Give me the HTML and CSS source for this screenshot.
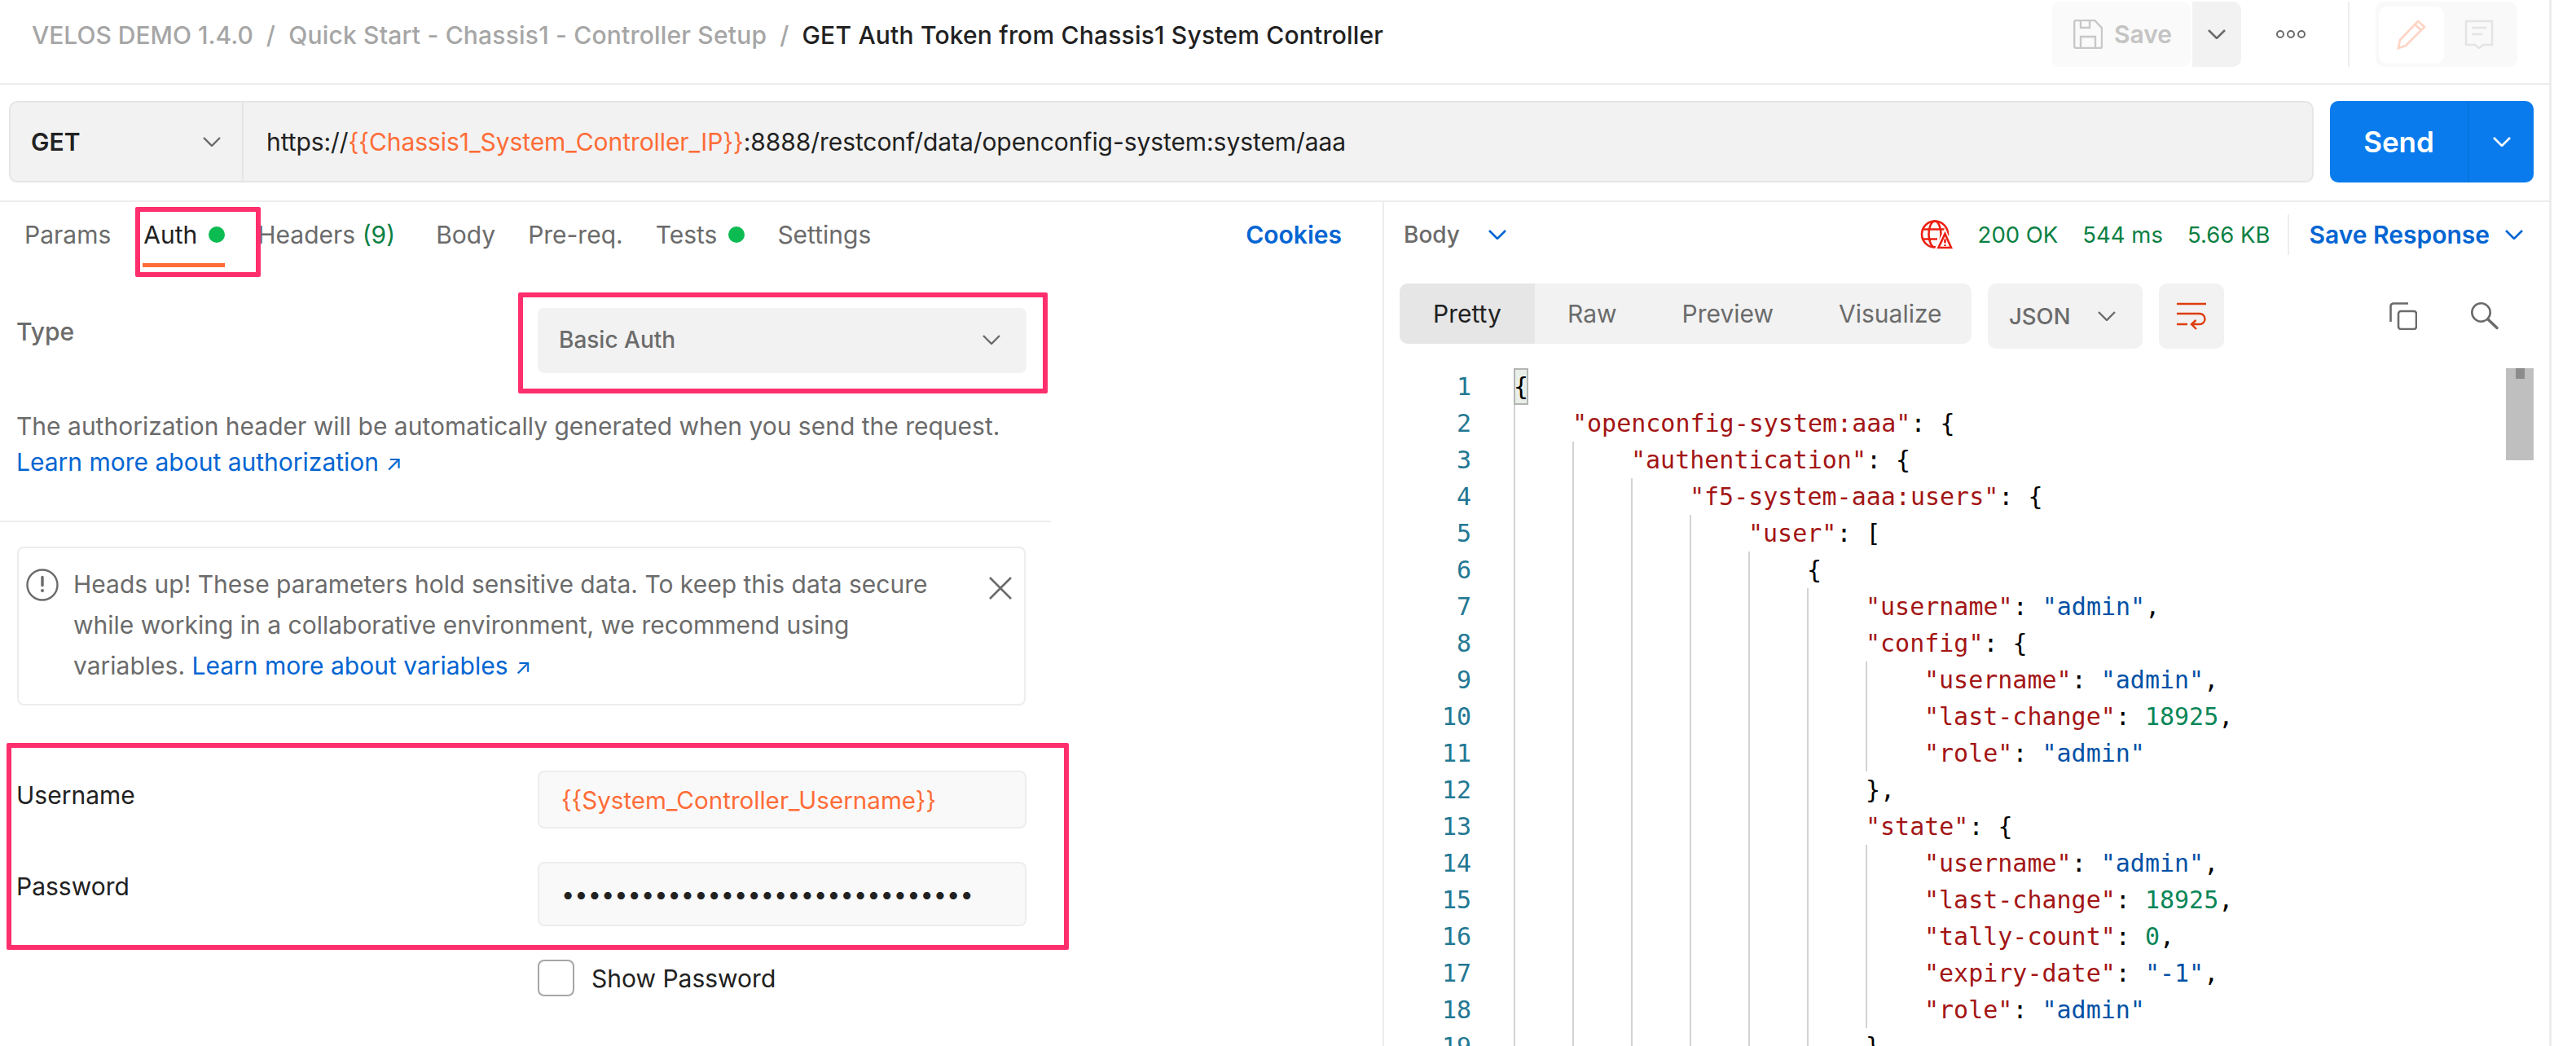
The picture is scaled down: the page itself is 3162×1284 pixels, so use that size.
FILE: index.html
```html
<!DOCTYPE html>
<html lang="en">
<head>
<meta charset="utf-8">
<title>GET Auth Token from Chassis1 System Controller</title>
<link rel="stylesheet" href="styles.css">
</head>
<body>
<div class="app">
  <header class="topbar">
    <nav class="crumbs">
      <span class="crumb root">VELOS DEMO 1.4.0</span><span class="sep">/</span>
      <span class="crumb">Quick Start - Chassis1 - Controller Setup</span><span class="sep">/</span>
      <span class="crumb current">GET Auth Token from Chassis1 System Controller</span>
    </nav>
    <div class="top-actions">
      <div class="save-btn">
        <svg class="ic-save" viewBox="0 0 36 36" fill="none" stroke="#c8c8c8" stroke-width="2.4"><path d="M1.2 3a2 2 0 0 1 2-2h23l8.800 9.500V33a2 2 0 0 1-2 2H3.200a2 2 0 0 1-2-2z"/><path d="M9 1v9h11V1M9 35V21h18v14"/></svg>
        <span>Save</span>
      </div>
      <div class="save-more"><svg class="chev" viewBox="0 0 22 12" fill="none" stroke="#6b6b6b" stroke-width="2.6"><path d="M1 1l10 10L21 1"/></svg></div>
      <div class="dots"><i></i><i></i><i></i></div>
      <div class="vline"></div>
      <div class="mode">
        <div class="mode-on"><svg width="38" height="38" viewBox="0 0 38 38" fill="none" stroke="#ffd4c4" stroke-width="2.6"><path d="M27 2l8 7L12 32l-9 3 2-10zM23 6l8 7"/></svg></div>
        <div class="mode-off"><svg width="36" height="36" viewBox="0 0 36 36" fill="none" stroke="#e4e4e4" stroke-width="2.6"><path d="M2 2h32v29H23l-5 4-5-4H2z"/><path d="M9 10h18M9 18h13"/></svg></div>
      </div>
    </div>
  </header>

  <section class="urlrow">
    <div class="urlbar">
      <div class="method"><b>GET</b><svg class="chev" viewBox="0 0 22 12" fill="none" stroke="#6b6b6b" stroke-width="2.4"><path d="M1 1l10 10L21 1"/></svg></div>
      <div class="url">https://<span class="var">{{Chassis1_System_Controller_IP}}</span>:8888/restconf/data/openconfig-system:system/aaa</div>
    </div>
    <div class="send">
      <span class="send-label">Send</span>
      <span class="send-more"><svg class="chev" viewBox="0 0 22 12" fill="none" stroke="#fff" stroke-width="2.6"><path d="M1 1l10 10L21 1"/></svg></span>
    </div>
  </section>

  <main class="panes">
    <section class="req">
      <div class="tabs">
        <span class="tab">Params</span>
        <span class="tab active">Auth<i class="dot"></i></span>
        <span class="tab wide">Headers <em>(9)</em></span>
        <span class="tab">Body</span>
        <span class="tab">Pre-req.</span>
        <span class="tab">Tests<i class="dot"></i></span>
        <span class="tab">Settings</span>
        <span class="cookies">Cookies</span>
      </div>
      <div class="auth">
        <div class="auth-left">
          <div class="type-label">Type</div>
          <p class="desc">The authorization header will be automatically generated when you send the request.<br><a class="link">Learn more about authorization <span class="arr">↗</span></a></p>
        </div>
        <div class="select"><span>Basic Auth</span><svg class="chev" viewBox="0 0 22 12" fill="none" stroke="#6b6b6b" stroke-width="2.4"><path d="M1 1l10 10L21 1"/></svg></div>
      </div>
      <div class="rule"></div>
      <div class="alert">
        <svg class="ic-info" viewBox="0 0 40 40" fill="none" stroke="#6b6b6b" stroke-width="2.4"><circle cx="20" cy="20" r="18.500"/><path d="M20 10.500v10" stroke-width="3.400" stroke-linecap="round"/><circle cx="20" cy="27" r="2" fill="#6b6b6b" stroke="none"/></svg>
        <p>Heads up! These parameters hold sensitive data. To keep this data secure while working in a collaborative environment, we recommend using variables. <a class="link">Learn more about variables <span class="arr">↗</span></a></p>
        <svg class="ic-close" viewBox="0 0 28 28" fill="none" stroke="#6b6b6b" stroke-width="2.6"><path d="M1 1l26 26M27 1L1 27"/></svg>
      </div>
      <div class="field user">
        <label>Username</label>
        <div class="input var">{{System_Controller_Username}}</div>
      </div>
      <div class="field secret">
        <label>Password</label>
        <div class="input pass">•••••••••••••••••••••••••••••••</div>
      </div>
      <div class="show"><i class="check"></i><span>Show Password</span></div>
    </section>

    <section class="res">
      <div class="res-head">
        <span class="res-body">Body</span>
        <svg class="chev body-chev" viewBox="0 0 22 12" fill="none" stroke="#0265d2" stroke-width="2.6"><path d="M1 1l10 10L21 1"/></svg>
        <svg class="ic-globe" viewBox="0 0 40 36" fill="none" stroke="#eb2013" stroke-width="2.600"><circle cx="18" cy="17.500" r="16"/><ellipse cx="18" cy="17.500" rx="7.500" ry="16"/><path d="M3 11.500h30M3 23.500h18"/><path d="M30.500 13L39 34.500H20z" fill="#fff" stroke="#fff" stroke-width="3"/><path d="M30.500 17L38 34H22.500z" fill="#fff"/><path d="M30.500 23.500v5M30.500 30.200v1.800"/></svg>
        <span class="stat">200 OK</span>
        <span class="stat">544 ms</span>
        <span class="stat">5.66 KB</span>
        <span class="res-sep"></span>
        <span class="save-res">Save Response</span>
        <svg class="chev save-chev" viewBox="0 0 22 12" fill="none" stroke="#0265d2" stroke-width="2.6"><path d="M1 1l10 10L21 1"/></svg>
      </div>
      <div class="res-tools">
        <div class="seg">
          <span class="seg-item on">Pretty</span>
          <span class="seg-item">Raw</span>
          <span class="seg-item">Preview</span>
          <span class="seg-item">Visualize</span>
        </div>
        <div class="fmt"><span>JSON</span><svg class="chev" viewBox="0 0 22 12" fill="none" stroke="#6b6b6b" stroke-width="2.4"><path d="M1 1l10 10L21 1"/></svg></div>
        <div class="wrap"><svg width="36" height="36" viewBox="0 0 36 36" fill="none" stroke="#dd3d0e" stroke-width="2.400"><path d="M0 3h36M0 15h28a6.500 6.500 0 0 1 0 13H18M23.500 23L18 28l6 6M0 28h13"/></svg></div>
        <svg class="ic-copy" viewBox="0 0 34 34" fill="none" stroke="#6b6b6b" stroke-width="2.600"><rect x="11" y="11" width="22" height="22" rx="3"/><path d="M1.500 24V5A3.500 3.500 0 0 1 5 1.500h18"/></svg>
        <svg class="ic-search" viewBox="0 0 34 34" fill="none" stroke="#6b6b6b" stroke-width="2.600" stroke-linecap="round"><circle cx="12.500" cy="12.500" r="11.200"/><path d="M21 21l11 10.500" stroke-width="3.400"/></svg>
      </div>
      <div class="editor">
        <div class="code">
          <div class="row"><span class="num">1</span><span class="brace">{</span></div>
          <div class="row"><span class="num">2</span><i class="g"></i><span class="k">"openconfig-system:aaa"</span>: {</div>
          <div class="row"><span class="num">3</span><i class="g"></i><i class="g"></i><span class="k">"authentication"</span>: {</div>
          <div class="row"><span class="num">4</span><i class="g"></i><i class="g"></i><i class="g"></i><span class="k">"f5-system-aaa:users"</span>: {</div>
          <div class="row"><span class="num">5</span><i class="g"></i><i class="g"></i><i class="g"></i><i class="g"></i><span class="k">"user"</span>: [</div>
          <div class="row"><span class="num">6</span><i class="g"></i><i class="g"></i><i class="g"></i><i class="g"></i><i class="g"></i>{</div>
          <div class="row"><span class="num">7</span><i class="g"></i><i class="g"></i><i class="g"></i><i class="g"></i><i class="g"></i><i class="g"></i><span class="k">"username"</span>: <span class="s">"admin"</span>,</div>
          <div class="row"><span class="num">8</span><i class="g"></i><i class="g"></i><i class="g"></i><i class="g"></i><i class="g"></i><i class="g"></i><span class="k">"config"</span>: {</div>
          <div class="row"><span class="num">9</span><i class="g"></i><i class="g"></i><i class="g"></i><i class="g"></i><i class="g"></i><i class="g"></i><i class="g"></i><span class="k">"username"</span>: <span class="s">"admin"</span>,</div>
          <div class="row"><span class="num">10</span><i class="g"></i><i class="g"></i><i class="g"></i><i class="g"></i><i class="g"></i><i class="g"></i><i class="g"></i><span class="k">"last-change"</span>: <span class="n">18925</span>,</div>
          <div class="row"><span class="num">11</span><i class="g"></i><i class="g"></i><i class="g"></i><i class="g"></i><i class="g"></i><i class="g"></i><i class="g"></i><span class="k">"role"</span>: <span class="s">"admin"</span></div>
          <div class="row"><span class="num">12</span><i class="g"></i><i class="g"></i><i class="g"></i><i class="g"></i><i class="g"></i><i class="g"></i>},</div>
          <div class="row"><span class="num">13</span><i class="g"></i><i class="g"></i><i class="g"></i><i class="g"></i><i class="g"></i><i class="g"></i><span class="k">"state"</span>: {</div>
          <div class="row"><span class="num">14</span><i class="g"></i><i class="g"></i><i class="g"></i><i class="g"></i><i class="g"></i><i class="g"></i><i class="g"></i><span class="k">"username"</span>: <span class="s">"admin"</span>,</div>
          <div class="row"><span class="num">15</span><i class="g"></i><i class="g"></i><i class="g"></i><i class="g"></i><i class="g"></i><i class="g"></i><i class="g"></i><span class="k">"last-change"</span>: <span class="n">18925</span>,</div>
          <div class="row"><span class="num">16</span><i class="g"></i><i class="g"></i><i class="g"></i><i class="g"></i><i class="g"></i><i class="g"></i><i class="g"></i><span class="k">"tally-count"</span>: <span class="n">0</span>,</div>
          <div class="row"><span class="num">17</span><i class="g"></i><i class="g"></i><i class="g"></i><i class="g"></i><i class="g"></i><i class="g"></i><i class="g"></i><span class="k">"expiry-date"</span>: <span class="s">"-1"</span>,</div>
          <div class="row"><span class="num">18</span><i class="g"></i><i class="g"></i><i class="g"></i><i class="g"></i><i class="g"></i><i class="g"></i><i class="g"></i><span class="k">"role"</span>: <span class="s">"admin"</span></div>
          <div class="row"><span class="num">19</span><i class="g"></i><i class="g"></i><i class="g"></i><i class="g"></i><i class="g"></i><i class="g"></i>}</div>
        </div>
        <div class="scroll"><i></i></div>
      </div>
    </section>
  </main>
</div>
<div class="mark mark-tab"></div>
<div class="mark mark-type"></div>
<div class="mark mark-cred"></div>
</body>
</html>
```
FILE: styles.css
```css
* { box-sizing: border-box; }
html, body { margin: 0; height: 1284px; overflow: hidden; background: #fff; }
body { position: relative; width: 3162px; font-family: Inter, "Liberation Sans", sans-serif; font-size: 30px; color: #6b6b6b; }
p { margin: 0; }
em { font-style: normal; color: #0b8043; }
.app { width: 3132px; height: 1284px; border-right: 3px solid #ededed; display: flex; flex-direction: column; }
.chev { width: 22px; height: 12px; flex: none; }
.var { color: #ff6c37; }

.topbar { height: 104px; flex: none; border-bottom: 2px solid #ededed; display: flex; justify-content: space-between; padding-left: 39px; }
.crumbs { display: flex; align-items: center; gap: 16px; height: 86px; color: #a6a6a6; font-weight: 500; white-space: nowrap; letter-spacing: 0.2px; }
.crumb.root { letter-spacing: 0; }
.crumb.current { color: #212121; }
.top-actions { display: flex; align-items: flex-start; padding-top: 2px; padding-right: 39px; }
.save-btn { width: 170px; height: 80px; background: #fafafa; border-radius: 8px 10px 10px 8px; display: flex; align-items: center; gap: 14px; padding-left: 26px; color: #c4c4c4; font-weight: 600; }
.ic-save { width: 36px; height: 36px; }
.save-more { width: 60px; height: 80px; margin-left: 2px; background: #f2f2f2; border-radius: 0 10px 10px 0; display: flex; align-items: center; justify-content: center; }
.dots { width: 131px; height: 80px; display: flex; align-items: center; justify-content: center; gap: 3px; padding-right: 9px; }
.dots i { width: 10px; height: 10px; border: 2.6px solid #6b6b6b; border-radius: 50%; }
.vline { width: 2px; height: 80px; background: #ededed; }
.mode { width: 174px; height: 80px; margin-left: 32px; background: #f9f9f9; border-radius: 10px; display: flex; padding: 6px 4px; }
.mode-on { width: 80px; height: 70px; background: #fff; border-radius: 10px; display: flex; align-items: center; justify-content: center; }
.mode-off { flex: 1; display: flex; align-items: center; justify-content: center; }

.urlrow { height: 144px; flex: none; border-bottom: 2px solid #ededed; display: flex; padding: 20px 19px 0 11px; gap: 20px; }
.urlbar { flex: 1; height: 100px; background: #f2f2f2; border: 2px solid #e6e6e6; border-radius: 10px; display: flex; align-items: center; color: #212121; }
.method { width: 286px; height: 100%; border-right: 2px solid #e6e6e6; display: flex; align-items: center; justify-content: space-between; padding: 0 26px 0 25px; }
.method b { font-weight: 600; }
.url { padding-left: 28px; letter-spacing: -0.07px; }
.send { width: 250px; height: 100px; background: #097bed; border-radius: 10px; display: flex; align-items: center; color: #fff; }
.send-label { width: 169px; height: 100%; display: flex; align-items: center; justify-content: center; font-size: 35px; font-weight: 600; }
.send-more { flex: 1; height: 100%; border-left: 2px solid #0774dd; display: flex; align-items: center; justify-content: center; }

.panes { flex: 1; display: flex; min-height: 0; }
.req { width: 1699px; flex: none; border-right: 2px solid #ededed; }
.res { flex: 1; min-width: 0; }

.tabs { height: 80px; display: flex; align-items: center; gap: 40px; padding: 0 50px 0 30px; }
.tab { display: flex; align-items: center; white-space: pre; }
.tab.wide { margin-right: 10px; }
.tab.active { color: #212121; position: relative; }
.tab.active::after { content: ""; position: absolute; left: -1px; right: 0; bottom: -22px; height: 5px; background: #ff6c37; }
.dot { width: 20px; height: 20px; margin-left: 14px; background: #0cbb52; border-radius: 50%; }
.cookies { margin-left: auto; color: #0265d2; font-weight: 600; }

.auth { display: flex; padding: 50px 0 0 20px; height: 311px; }
.auth-left { width: 640px; flex: none; }
.type-label { font-weight: 500; line-height: 40px; margin-top: 9px; }
.desc { width: 1300px; margin-top: 74px; line-height: 44px; }
.link { color: #0265d2; }
.arr { font-size: 26px; }
.select { width: 600px; height: 80px; background: #f2f2f2; border-radius: 8px; display: flex; align-items: center; justify-content: space-between; padding: 0 32px 2px 26px; font-weight: 500; font-size: 28px; }
.rule { height: 2px; width: 1290px; background: #ededed; }

.alert { width: 1238px; margin: 30px 0 0 21px; height: 195px; border: 2px solid #ededed; border-radius: 8px; display: flex; padding: 19px 0 0 9px; line-height: 50px; }
.alert p { width: 1060px; margin-left: 18px; flex: none; }
.ic-info { width: 40px; height: 40px; flex: none; margin-top: 6px; }
.ic-close { width: 28px; height: 28px; flex: none; margin: 16px 0 0 64px; }

.field { display: flex; align-items: flex-start; padding-left: 20px; color: #212121; }
.field label { width: 640px; line-height: 40px; padding-top: 10px; }
.input { width: 600px; height: 71px; background: #f9f9f9; border: 2px solid #ededed; border-radius: 8px; display: flex; align-items: center; padding-left: 27px; }
.field.user { margin-top: 80px; }
.field.user .input { color: #ff6c37; font-size: 29.6px; }
.field.secret { margin-top: 41px; }
.field.secret .input { height: 79px; }
.pass { color: #212121; font-size: 29px; }
.show { display: flex; align-items: center; gap: 21px; margin: 41px 0 0 660px; color: #212121; }
.check { width: 45px; height: 45px; border: 2px solid #a6a6a6; border-radius: 8px; }

.res-head { height: 100px; padding: 0 32px 20px 24px; display: flex; align-items: center; color: #6b6b6b; }
.res-body { font-weight: 500; font-size: 28px; }
.body-chev { margin-left: 35px; }
.save-chev { margin-left: 19px; }
.ic-globe { width: 40px; height: 36px; margin-left: auto; margin-right: 31px; }
.stat { color: #0b8043; font-size: 27.5px; margin-right: 30px; }
.res-sep { width: 2px; height: 50px; background: #ededed; margin: 0 24px 0 -8px; }
.save-res { color: #0265d2; font-weight: 600; }

.res-tools { height: 104px; display: flex; align-items: flex-start; padding-left: 19px; }
.seg { width: 702px; height: 74px; background: #f2f2f2; border-radius: 10px; display: flex; overflow: hidden; flex: none; }
.seg-item { display: flex; align-items: center; padding: 0 40px; flex: none; }
.seg-item.on { width: 166px; justify-content: center; padding: 0; background: #e6e6e6; color: #212121; }
.fmt { width: 190px; height: 80px; margin-left: 20px; background: #f2f2f2; border-radius: 10px; display: flex; align-items: center; justify-content: space-between; padding: 0 33px 0 26px; font-weight: 500; font-size: 27.5px; }
.wrap { width: 80px; height: 80px; margin-left: 20px; background: #f2f2f2; border-radius: 10px; display: flex; align-items: center; justify-content: center; }
.ic-copy { width: 34px; height: 34px; margin: 23px 0 0 203px; }
.ic-search { width: 34px; height: 34px; margin: 23px 0 0 66px; }

.editor { position: relative; height: 880px; overflow: hidden; }
.code { font-family: "DejaVu Sans Mono", "Liberation Mono", monospace; font-size: 30px; line-height: 45px; color: #000; }
.row { display: flex; height: 45px; white-space: pre; }
.num { width: 107px; flex: none; text-align: right; color: #237893; margin-right: 52px; }
.g { width: 72px; flex: none; border-left: 2.5px solid #d3d3d3; }
.brace { background: #e8efe8; outline: 2px solid #b4b4b4; outline-offset: -2px; }
.k { color: #a31515; }
.s { color: #0451a5; }
.n { color: #098658; }
.scroll { position: absolute; top: 0; left: 1377px; width: 34px; height: 113px; background: #bfbfbf; }
.scroll i { display: block; width: 11px; height: 13px; margin-left: 12px; background: #8c8c8c; }

.mark { position: absolute; border: 6px solid #ff2e6d; border-radius: 2px; pointer-events: none; }
.mark-tab { left: 166px; top: 254px; width: 154px; height: 86px; }
.mark-type { left: 636px; top: 359px; width: 650px; height: 124px; }
.mark-cred { left: 8px; top: 912px; width: 1304px; height: 254px; }
```
